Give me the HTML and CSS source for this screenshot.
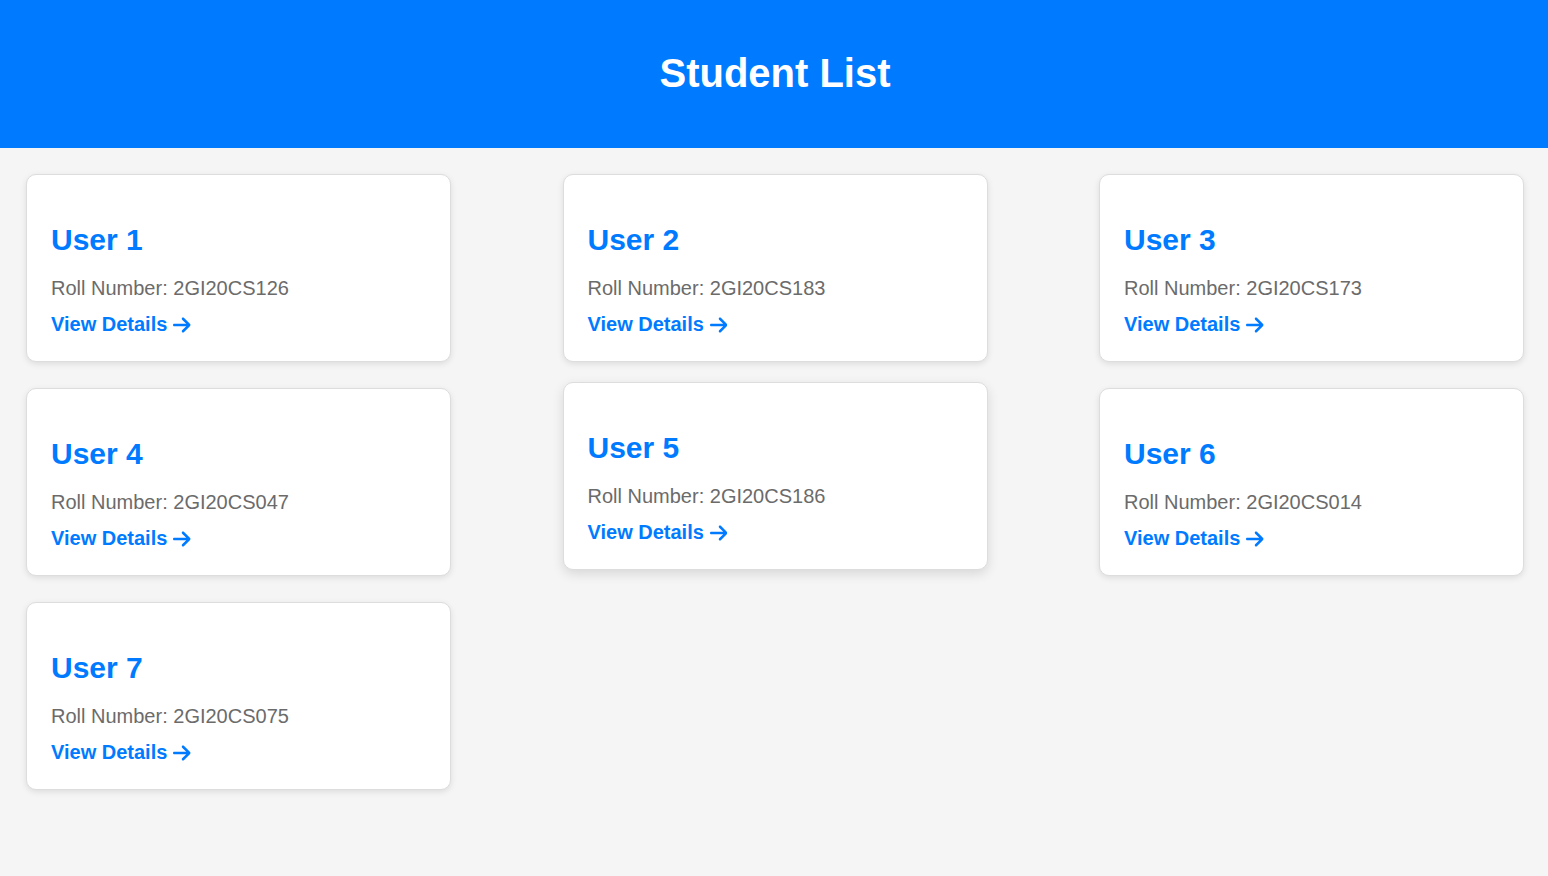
FILE: index.html
```html
<!DOCTYPE html>
<html lang="en">
<head>
<meta charset="utf-8">
<title>Student List</title>
<link rel="stylesheet" href="styles.css">
</head>
<body>
<header class="header">
  <h1 class="header-title">Student List</h1>
</header>
<main class="grid">
  <div class="card">
    <h2 class="card-title">User 1</h2>
    <p class="card-roll">Roll Number: 2GI20CS126</p>
    <a class="card-link" href="#">View Details <svg class="arrow" viewBox="0 0 448 512"><path d="M438.6 278.6c12.5-12.5 12.5-32.8 0-45.3l-160-160c-12.5-12.5-32.8-12.5-45.3 0s-12.5 32.8 0 45.3L338.8 224 32 224c-17.7 0-32 14.3-32 32s14.3 32 32 32l306.7 0L233.4 393.4c-12.5 12.5-12.5 32.8 0 45.3s32.8 12.5 45.3 0l160-160z"/></svg></a>
  </div>
  <div class="card">
    <h2 class="card-title">User 2</h2>
    <p class="card-roll">Roll Number: 2GI20CS183</p>
    <a class="card-link" href="#">View Details <svg class="arrow" viewBox="0 0 448 512"><path d="M438.6 278.6c12.5-12.5 12.5-32.8 0-45.3l-160-160c-12.5-12.5-32.8-12.5-45.3 0s-12.5 32.8 0 45.3L338.8 224 32 224c-17.7 0-32 14.3-32 32s14.3 32 32 32l306.7 0L233.4 393.4c-12.5 12.5-12.5 32.8 0 45.3s32.8 12.5 45.3 0l160-160z"/></svg></a>
  </div>
  <div class="card">
    <h2 class="card-title">User 3</h2>
    <p class="card-roll">Roll Number: 2GI20CS173</p>
    <a class="card-link" href="#">View Details <svg class="arrow" viewBox="0 0 448 512"><path d="M438.6 278.6c12.5-12.5 12.5-32.8 0-45.3l-160-160c-12.5-12.5-32.8-12.5-45.3 0s-12.5 32.8 0 45.3L338.8 224 32 224c-17.7 0-32 14.3-32 32s14.3 32 32 32l306.7 0L233.4 393.4c-12.5 12.5-12.5 32.8 0 45.3s32.8 12.5 45.3 0l160-160z"/></svg></a>
  </div>
  <div class="card">
    <h2 class="card-title">User 4</h2>
    <p class="card-roll">Roll Number: 2GI20CS047</p>
    <a class="card-link" href="#">View Details <svg class="arrow" viewBox="0 0 448 512"><path d="M438.6 278.6c12.5-12.5 12.5-32.8 0-45.3l-160-160c-12.5-12.5-32.8-12.5-45.3 0s-12.5 32.8 0 45.3L338.8 224 32 224c-17.7 0-32 14.3-32 32s14.3 32 32 32l306.7 0L233.4 393.4c-12.5 12.5-12.5 32.8 0 45.3s32.8 12.5 45.3 0l160-160z"/></svg></a>
  </div>
  <div class="card card-hover">
    <h2 class="card-title">User 5</h2>
    <p class="card-roll">Roll Number: 2GI20CS186</p>
    <a class="card-link" href="#">View Details <svg class="arrow" viewBox="0 0 448 512"><path d="M438.6 278.6c12.5-12.5 12.5-32.8 0-45.3l-160-160c-12.5-12.5-32.8-12.5-45.3 0s-12.5 32.8 0 45.3L338.8 224 32 224c-17.7 0-32 14.3-32 32s14.3 32 32 32l306.7 0L233.4 393.4c-12.5 12.5-12.5 32.8 0 45.3s32.8 12.5 45.3 0l160-160z"/></svg></a>
  </div>
  <div class="card">
    <h2 class="card-title">User 6</h2>
    <p class="card-roll">Roll Number: 2GI20CS014</p>
    <a class="card-link" href="#">View Details <svg class="arrow" viewBox="0 0 448 512"><path d="M438.6 278.6c12.5-12.5 12.5-32.8 0-45.3l-160-160c-12.5-12.5-32.8-12.5-45.3 0s-12.5 32.8 0 45.3L338.8 224 32 224c-17.7 0-32 14.3-32 32s14.3 32 32 32l306.7 0L233.4 393.4c-12.5 12.5-12.5 32.8 0 45.3s32.8 12.5 45.3 0l160-160z"/></svg></a>
  </div>
  <div class="card">
    <h2 class="card-title">User 7</h2>
    <p class="card-roll">Roll Number: 2GI20CS075</p>
    <a class="card-link" href="#">View Details <svg class="arrow" viewBox="0 0 448 512"><path d="M438.6 278.6c12.5-12.5 12.5-32.8 0-45.3l-160-160c-12.5-12.5-32.8-12.5-45.3 0s-12.5 32.8 0 45.3L338.8 224 32 224c-17.7 0-32 14.3-32 32s14.3 32 32 32l306.7 0L233.4 393.4c-12.5 12.5-12.5 32.8 0 45.3s32.8 12.5 45.3 0l160-160z"/></svg></a>
  </div>
</main>
</body>
</html>
```
FILE: styles.css
```css
* {
  box-sizing: border-box;
}

html, body {
  margin: 0;
  padding: 0;
}

body {
  background: #f5f5f5;
  font-family: "Liberation Sans", Arial, sans-serif;
  min-height: 876px;
}

.header {
  background: #007bff;
  height: 148px;
  display: flex;
  align-items: center;
  justify-content: center;
  padding-bottom: 2px;
}

.header-title {
  margin: 0;
  color: #ffffff;
  font-size: 40px;
  font-weight: bold;
  line-height: 46px;
  padding-left: 2px;
}

.grid {
  display: grid;
  grid-template-columns: repeat(3, 425px);
  justify-content: space-between;
  align-items: start;
  row-gap: 26px;
  padding: 26px 24px 20px 26px;
}

.card {
  background: #ffffff;
  border: 1px solid #dddddd;
  border-radius: 10px;
  box-shadow: 0 2px 6px rgba(0, 0, 0, 0.1);
  padding: 20px 24px 20px 24px;
  height: 188px;
}

.card-hover {
  transform: translateY(-6px);
  box-shadow: 0 4px 12px rgba(0, 0, 0, 0.12);
}

.card-title {
  margin: 28px 0 20px;
  color: #007bff;
  font-size: 30px;
  line-height: 34px;
  font-weight: bold;
}

.card-roll {
  margin: 0 0 13px;
  color: #6b6b6b;
  font-size: 20px;
  line-height: 23px;
}

.card-link {
  display: inline-flex;
  align-items: center;
  gap: 6px;
  color: #007bff;
  font-size: 20px;
  line-height: 23px;
  font-weight: bold;
  text-decoration: none;
}

.arrow {
  width: 17.5px;
  height: 20px;
  fill: #007bff;
  margin-top: 1px;
}
```
